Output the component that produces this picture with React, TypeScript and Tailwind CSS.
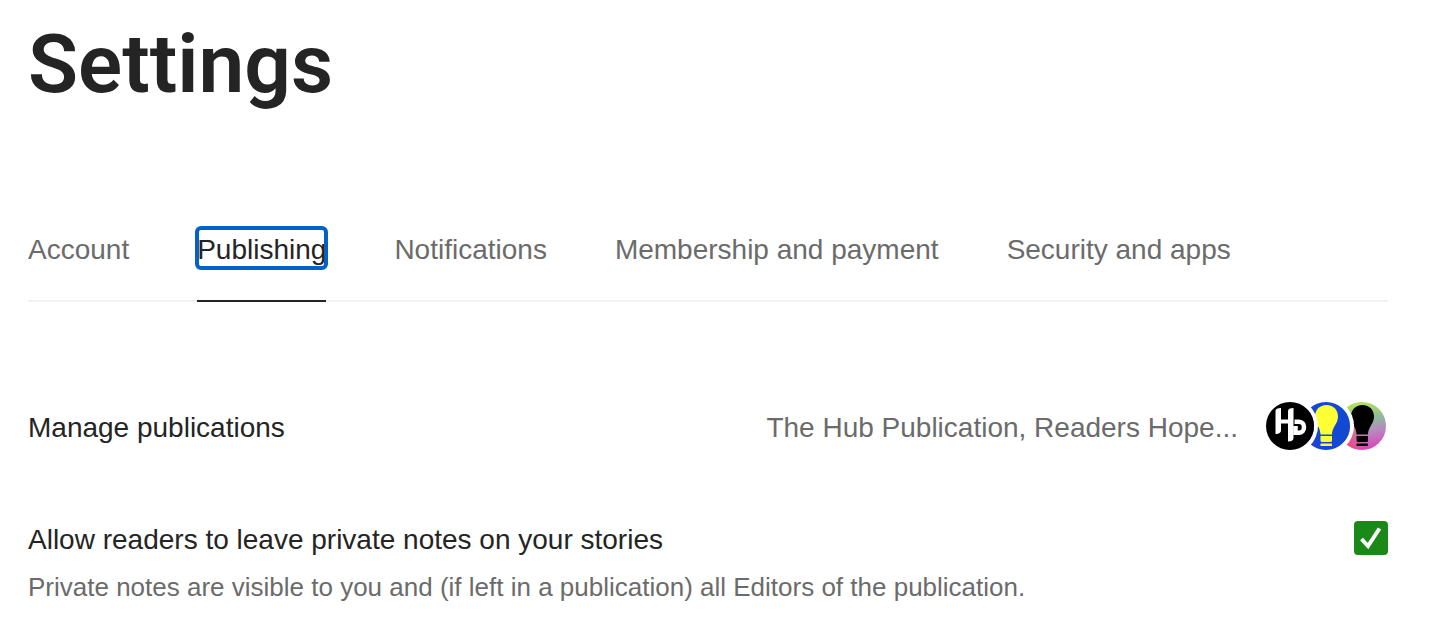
import React, { useState } from 'react'
import clsx from 'clsx'

const HubLogo = () => (
  <svg viewBox="0 0 48 48" className="w-full h-full" fill="none" aria-hidden="true">
    <circle cx="24" cy="24" r="24" fill="#000" />
    <g fill="#fff">
      <path d="M9.500 9C9.500 7 11.500 6 15 6V28C15 31 12.500 32 9.500 32Z" />
      <path d="M22 9C22 7 24 6 27.500 6V36C27.500 38.500 25.500 39.500 22 39.500Z" />
      <path d="M14 17.500H23V21.500H14Z" />
    </g>
    <path d="M28.500 19.800H33C36.500 19.800 38 22.500 38 25.200C38 28.500 36 30.700 33 30.700H29.500V24" stroke="#fff" strokeWidth="4.500" />
  </svg>
)

const Bulb = ({ fill }: { fill: string }) => (
  <g fill={fill}>
    <path d="M24.500 3C17.500 3 13 8 13 14.500C13 22 18.500 25 18.500 32.500H30C30 25 36 22 36 14.500C36 8 31.500 3 24.500 3Z" />
    <path d="M18.500 34H30V38.500C30 39.500 29 40 28 40H20.500C19.500 40 18.500 39.500 18.500 38.500Z" />
    <rect x="18.500" y="41.500" width="11.500" height="2.500" rx="0.500" />
  </g>
)

const BlueBulbLogo = () => (
  <svg viewBox="0 0 48 48" className="w-full h-full" aria-hidden="true">
    <circle cx="24" cy="24" r="24" fill="#1248d4" />
    <Bulb fill="#ffff35" />
  </svg>
)

const RainbowBulbLogo = () => (
  <svg viewBox="0 0 48 48" className="w-full h-full" aria-hidden="true">
    <defs>
      <linearGradient id="rainbow" x1="0.4" y1="0" x2="0.6" y2="1">
        <stop offset="0" stopColor="#b5e450" />
        <stop offset="0.4" stopColor="#8fb8a0" />
        <stop offset="0.65" stopColor="#b888c0" />
        <stop offset="1" stopColor="#e040b8" />
      </linearGradient>
      <linearGradient id="rainbow-edge" x1="0" y1="0.5" x2="1" y2="0.5">
        <stop offset="0.3" stopColor="#f04870" />
        <stop offset="1" stopColor="#f04870" stopOpacity="0" />
      </linearGradient>
    </defs>
    <circle cx="24" cy="24" r="24" fill="url(#rainbow)" />
    <path d="M0 24A24 24 0 0 0 24 48V24Z" fill="url(#rainbow-edge)" />
    <Bulb fill="#000" />
  </svg>
)

export default function App() {
  const [active, setActive] = useState('Publishing')
  const [allowNotes, setAllowNotes] = useState(true)

  return (
    <main className="bg-white pl-7 pr-12 pt-4 pb-6 font-['Liberation_Sans',Arial,sans-serif] text-[28px] leading-10 text-[#242424]">
      <h1 className="font-[Roboto,sans-serif] text-[82px] leading-[96px] font-semibold">Settings</h1>

      <nav className="mt-[116px] flex gap-[68px] border-b-2 border-[#f2f2f2]">
        {tabs.map((tab) => (
          <div
            key={tab}
            className={clsx('-mb-0.5 pb-8 border-b-2', tab === active ? 'border-[#242424]' : 'border-transparent')}
          >
            <button
              type="button"
              onClick={() => setActive(tab)}
              className={clsx(
                'block h-10 pt-1 leading-9 whitespace-nowrap',
                tab === active
                  ? 'rounded-sm outline-4 -outline-offset-2 outline-[#0461c8]'
                  : 'text-[#6b6b6b] outline-none',
              )}
            >
              {tab}
            </button>
          </div>
        ))}
      </nav>

      <section className="mt-[100px] flex items-center justify-between">
        <h2 className="pt-1">Manage publications</h2>
        <button type="button" className="flex items-center gap-7 text-[#6b6b6b]">
          <span className="pt-1">The Hub Publication, Readers Hope...</span>
          <span className="flex pr-0.5">
            {logos.map(({ name, logo }) => (
              <span
                key={name}
                className="relative -ml-3 h-12 w-12 rounded-full ring-4 ring-white first:z-20 first:ml-0 last:z-0 z-10"
              >
                {logo}
              </span>
            ))}
          </span>
        </button>
      </section>

      <section className="mt-[70px] flex items-start justify-between">
        <div>
          <label htmlFor="private-notes">Allow readers to leave private notes on your stories</label>
          <p id="private-notes-hint" className="mt-[7px] text-[26px] text-[#6b6b6b]">
            Private notes are visible to you and (if left in a publication) all Editors of the publication.
          </p>
        </div>
        <span className="relative mt-px flex">
          <input
            id="private-notes"
            type="checkbox"
            aria-describedby="private-notes-hint"
            checked={allowNotes}
            onChange={(e) => setAllowNotes(e.target.checked)}
            className="h-[34px] w-[34px] appearance-none rounded-sm border-2 border-[#1a8917] checked:bg-[#1a8917]"
          />
          {allowNotes && (
            <svg viewBox="0 0 34 34" className="pointer-events-none absolute inset-0" fill="none" aria-hidden="true">
              <path d="M7.500 18L14 25L25.500 7.500" stroke="#fff" strokeWidth="4" />
            </svg>
          )}
        </span>
      </section>
    </main>
  )
}

const tabs = ['Account', 'Publishing', 'Notifications', 'Membership and payment', 'Security and apps']

const logos = [
  { name: 'hub', logo: <HubLogo /> },
  { name: 'blue', logo: <BlueBulbLogo /> },
  { name: 'rainbow', logo: <RainbowBulbLogo /> },
]
